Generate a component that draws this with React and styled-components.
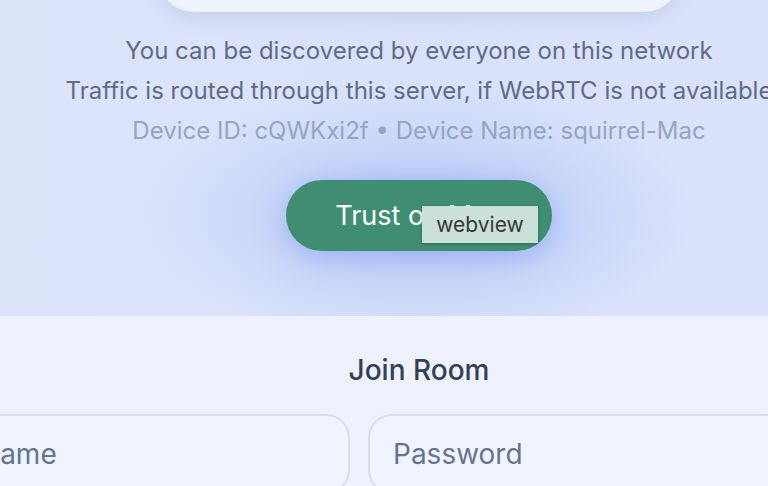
import React from "react";
import styled, { createGlobalStyle } from "styled-components";

const GlobalStyle = createGlobalStyle`
  html, body {
    margin: 0;
    padding: 0;
    overflow: hidden;
    background: #edf2fe;
    font-family: Inter, "Noto Sans", sans-serif;
  }
`;

const Stage = styled.div`
  width: 1240px;
  margin-left: -201px;
  display: flex;
  flex-direction: column;
`;

const TopSection = styled.section`
  height: 316px;
  display: flex;
  flex-direction: column;
  align-items: center;
  background:
    radial-gradient(ellipse 280px 130px at 620px 215px, rgba(176, 196, 246, 0.85), rgba(176, 196, 246, 0) 100%),
    linear-gradient(90deg, #dde5fa 0%, #d9e2fa 50%, #dbe3fc 100%);
`;

const TopCard = styled.div`
  width: 522px;
  height: 72px;
  margin-top: -60px;
  background: #eef3fd;
  border-radius: 40px;
  box-shadow: 0 6px 18px rgba(110, 130, 180, 0.18);
`;

const InfoBlock = styled.div`
  margin-top: 19px;
  display: flex;
  flex-direction: column;
  align-items: center;
`;

const InfoLine = styled.p`
  margin: 0;
  font-size: 24px;
  line-height: 40px;
  white-space: nowrap;
  color: ${(p) => (p.$muted ? "#98a4bf" : "#5f6b85")};
`;

const ButtonWrap = styled.div`
  position: relative;
  margin-top: 29px;
`;

const TrustButton = styled.button`
  width: 266px;
  height: 71px;
  border: none;
  border-radius: 36px;
  background: #3f8e71;
  color: #ffffff;
  font-family: Inter, "Noto Sans", sans-serif;
  font-size: 27px;
  box-shadow: 0 6px 30px rgba(120, 150, 240, 0.55);
  cursor: pointer;
`;

const Tooltip = styled.div`
  position: absolute;
  left: 136px;
  top: 26px;
  width: 116px;
  height: 37px;
  box-sizing: border-box;
  display: flex;
  align-items: center;
  justify-content: center;
  background: #cbe1d8;
  color: #383838;
  font-size: 21px;
  box-shadow: 0 1px 3px rgba(0, 0, 0, 0.25);
`;

const BottomSection = styled.section`
  height: 200px;
  display: flex;
  flex-direction: column;
  align-items: center;
  padding-top: 34px;
  background: #edf2fe;
`;

const Title = styled.h2`
  margin: 0;
  font-size: 28px;
  line-height: 40px;
  font-weight: 500;
  color: #334056;
`;

const InputRow = styled.div`
  margin-top: 24px;
  display: flex;
  gap: 18px;
`;

const Field = styled.input`
  width: ${(p) => p.$w}px;
  height: 80px;
  box-sizing: border-box;
  padding: 0 23px;
  border: 2px solid #d7dfee;
  border-radius: 24px;
  background: #f0f4fe;
  font-family: Inter, "Noto Sans", sans-serif;
  font-size: 28px;
  color: #334056;
  outline: none;
  &::placeholder {
    color: #65748f;
  }
`;

const JoinButton = styled.button`
  width: 157px;
  height: 80px;
  border: none;
  border-radius: 24px;
  background: #3f8e71;
  color: #fff;
  font-size: 24px;
`;

export default function App() {
  return (
    <>
      <GlobalStyle />
      <Stage>
        <TopSection>
          <TopCard />
          <InfoBlock>
            <InfoLine>You can be discovered by everyone on this network</InfoLine>
            <InfoLine>Traffic is routed through this server, if WebRTC is not available</InfoLine>
            <InfoLine $muted>Device ID: cQWKxi2f • Device Name: squirrel-Mac</InfoLine>
          </InfoBlock>
          <ButtonWrap>
            <TrustButton>Trust on Mac</TrustButton>
            <Tooltip>webview</Tooltip>
          </ButtonWrap>
        </TopSection>
        <BottomSection>
          <Title>Join Room</Title>
          <InputRow>
            <Field $w={475} placeholder="Room name" />
            <Field $w={420} placeholder="Password" type="password" />
            <JoinButton>Join</JoinButton>
          </InputRow>
        </BottomSection>
      </Stage>
    </>
  );
}
